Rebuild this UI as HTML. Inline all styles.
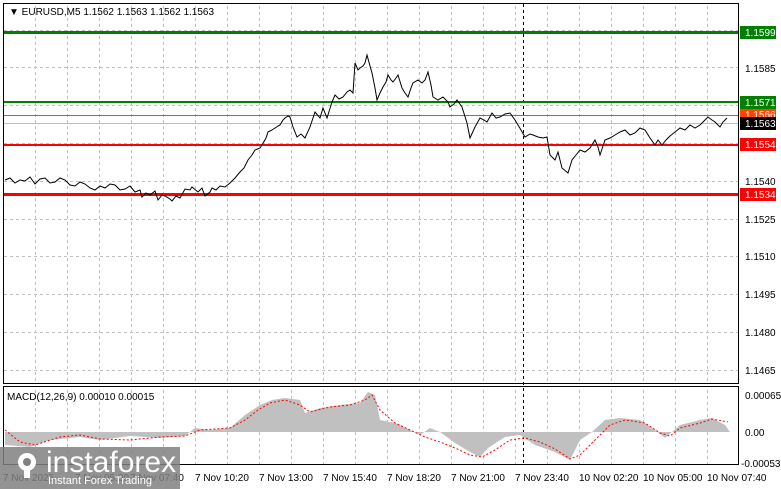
<!DOCTYPE html>
<html><head><meta charset="utf-8"><style>
body{margin:0;width:781px;height:489px;background:#fff;overflow:hidden;font-family:"Liberation Sans",sans-serif;}
svg{position:absolute;left:0;top:0}
</style></head><body>
<svg width="781" height="489" xmlns="http://www.w3.org/2000/svg" font-family="Liberation Sans, sans-serif" font-size="10">
<defs>
<pattern id="vg" width="32" height="489" patternUnits="userSpaceOnUse" x="35">
<line x1="0.5" y1="0" x2="0.5" y2="489" stroke="#c0c0c0" stroke-dasharray="3,3"/>
</pattern>
</defs>
<rect x="4" y="4" width="734" height="379" fill="url(#vg)"/>
<g stroke="#c0c0c0" stroke-dasharray="3,3">
<line x1="4" y1="30.5" x2="738" y2="30.5"/><line x1="4" y1="67.5" x2="738" y2="67.5"/><line x1="4" y1="105.5" x2="738" y2="105.5"/><line x1="4" y1="143.5" x2="738" y2="143.5"/><line x1="4" y1="181.5" x2="738" y2="181.5"/><line x1="4" y1="219.5" x2="738" y2="219.5"/><line x1="4" y1="256.5" x2="738" y2="256.5"/><line x1="4" y1="294.5" x2="738" y2="294.5"/><line x1="4" y1="332.5" x2="738" y2="332.5"/><line x1="4" y1="370.5" x2="738" y2="370.5"/>
</g>
<line x1="523.5" y1="4" x2="523.5" y2="464" stroke="#000" stroke-dasharray="3,3"/>
<line x1="4" y1="32.5" x2="738" y2="32.5" stroke="#008000" stroke-width="3"/>
<line x1="4" y1="102" x2="738" y2="102" stroke="#008000" stroke-width="2"/>
<line x1="4" y1="115.5" x2="738" y2="115.5" stroke="#ff4500" stroke-width="1"/>
<line x1="4" y1="123.5" x2="738" y2="123.5" stroke="#c0c0c0" stroke-width="1"/>
<line x1="4" y1="145" x2="738" y2="145" stroke="#ff0000" stroke-width="2"/>
<line x1="4" y1="194.5" x2="738" y2="194.5" stroke="#ff0000" stroke-width="3"/>
<polyline fill="none" stroke="#000" stroke-width="1" points="5,180 10,178 15,183 20,180 25,181 30,177 35,184 40,179 45,178 50,183 55,182 60,178 65,180 70,185 75,186 80,182 85,184 90,188 95,190 100,186 105,188 110,184 115,185 120,190 125,189 130,186 135,192 140,190 142,197 146,193 150,195 155,191 158,200 162,195 165,196 170,199 172,201 176,196 180,198 185,189 190,190 192,187 198,192 202,188 205,196 210,192 212,188 216,190 220,186 225,187 230,183 235,178 240,172 244,168 248,160 252,155 255,150 260,148 262,145 266,138 268,132 272,130 275,128 278,126 280,125 283,120 285,118 288,116 290,117 293,127 297,137 301,134 305,138 310,127 315,112 320,118 323,108 327,118 332,102 335,95 339,99 343,97 347,92 350,90 353,93 355,63 358,70 360,68 363,66 365,63 367,55 370,66 372,73 375,88 377,100 380,93 383,87 386,82 388,75 391,80 393,82 396,78 398,75 402,88 405,93 408,97 411,88 413,83 418,80 422,83 425,80 428,72 431,85 433,97 438,100 443,97 448,102 450,107 454,104 457,100 462,107 467,123 470,138 475,127 480,118 484,120 487,122 492,113 496,118 500,117 505,114 510,113 515,120 518,125 521,130 525,137 530,134 533,135 538,137 543,138 547,137 550,155 555,160 558,152 562,168 568,173 572,160 576,155 580,150 585,152 590,148 595,140 598,147 600,155 605,140 610,138 615,135 620,132 625,130 630,135 635,133 640,128 645,130 650,138 655,145 658,140 662,145 666,140 670,136 675,132 680,128 685,130 690,125 695,128 700,125 705,120 708,117 712,120 715,122 720,127 723,122 727,118"/>
<rect x="3.5" y="3.5" width="735" height="380" fill="none" stroke="#000"/>
<text x="9" y="15" font-size="10">▼ EURUSD,M5  1.1562 1.1563 1.1562 1.1563</text>
<g font-size="10" fill="#000">
<text x="745" y="72">1.1585</text><text x="745" y="185">1.1540</text><text x="745" y="223">1.1525</text><text x="745" y="260">1.1510</text><text x="745" y="298">1.1495</text><text x="745" y="336">1.1480</text><text x="745" y="374">1.1465</text>
</g>
<rect x="740" y="26" width="36" height="13" fill="#008000"/><text x="745" y="36" fill="#fff">1.1599</text>
<rect x="740" y="96" width="36" height="13" fill="#008000"/><text x="745" y="106" fill="#fff">1.1571</text>
<rect x="740" y="109" width="36" height="10" fill="#ff4500"/><text x="745" y="118" fill="#fff">1.1566</text>
<rect x="740" y="117" width="36" height="13" fill="#000"/><text x="745" y="127" fill="#fff">1.1563</text>
<rect x="740" y="138" width="36" height="13" fill="#ff0000"/><text x="745" y="148" fill="#fff">1.1554</text>
<rect x="740" y="188" width="36" height="13" fill="#ff0000"/><text x="745" y="198" fill="#fff">1.1534</text>
<rect x="4" y="387" width="734" height="77" fill="url(#vg)"/>
<polygon fill="#c0c0c0" points="5,432 5,445 30,447 50,440 80,437 100,440 130,436 160,438 185,436 195,428 210,430 230,428 245,415 260,405 272,400 285,398 300,400 305,413 320,408 340,405 360,403 368,392 375,395 380,420 395,423 410,430 420,435 430,428 440,432 455,443 470,452 480,457 488,448 505,437 520,435 535,445 555,452 570,460 580,440 592,432 605,420 620,418 640,420 655,430 665,438 680,425 700,420 712,418 725,425 730,432"/>
<polyline fill="none" stroke="#ff0000" stroke-dasharray="2,2" points="5,430 20,442 35,445 60,437 80,435 100,439 130,440 160,437 185,436 200,430 230,428 245,420 258,410 270,403 285,400 300,405 310,412 330,407 350,405 365,400 372,395 380,410 395,423 410,430 425,437 440,442 455,448 470,455 482,457 495,450 510,440 525,438 540,442 555,449 570,459 580,455 595,440 610,425 625,420 645,423 660,433 670,436 680,428 700,423 712,419 728,422"/>
<rect x="3.5" y="386.5" width="735" height="78" fill="none" stroke="#000"/>
<text x="7" y="400" font-size="10">MACD(12,26,9) 0.00010 0.00015</text>
<text x="745" y="399">0.00065</text><text x="745" y="436">0.00</text><text x="741" y="467">-0.00053</text>
<g font-size="10">
<text x="3" y="481">7 Nov 2025</text><text x="75" y="481">7 Nov 05:00</text><text x="130" y="481">7 Nov 07:40</text>
<text x="195" y="481">7 Nov 10:20</text><text x="259" y="481">7 Nov 13:00</text><text x="323" y="481">7 Nov 15:40</text><text x="387" y="481">7 Nov 18:20</text><text x="451" y="481">7 Nov 21:00</text><text x="515" y="481">7 Nov 23:40</text><text x="579" y="481">10 Nov 02:20</text><text x="643" y="481">10 Nov 05:00</text><text x="707" y="481">10 Nov 07:40</text>
</g>
<rect x="0" y="447" width="180" height="42" fill="#808080" opacity="0.85"/>
<g fill="#fff">
<circle cx="27" cy="462" r="9"/>
<rect x="24" y="462" width="6" height="16"/>
</g>
<circle cx="27" cy="462" r="4" fill="#808080"/>
<text x="46" y="472" font-size="30" fill="#fff">instaforex</text>
<text x="48" y="484" font-size="11" fill="#fff">Instant Forex Trading</text>
</svg>
</body></html>
